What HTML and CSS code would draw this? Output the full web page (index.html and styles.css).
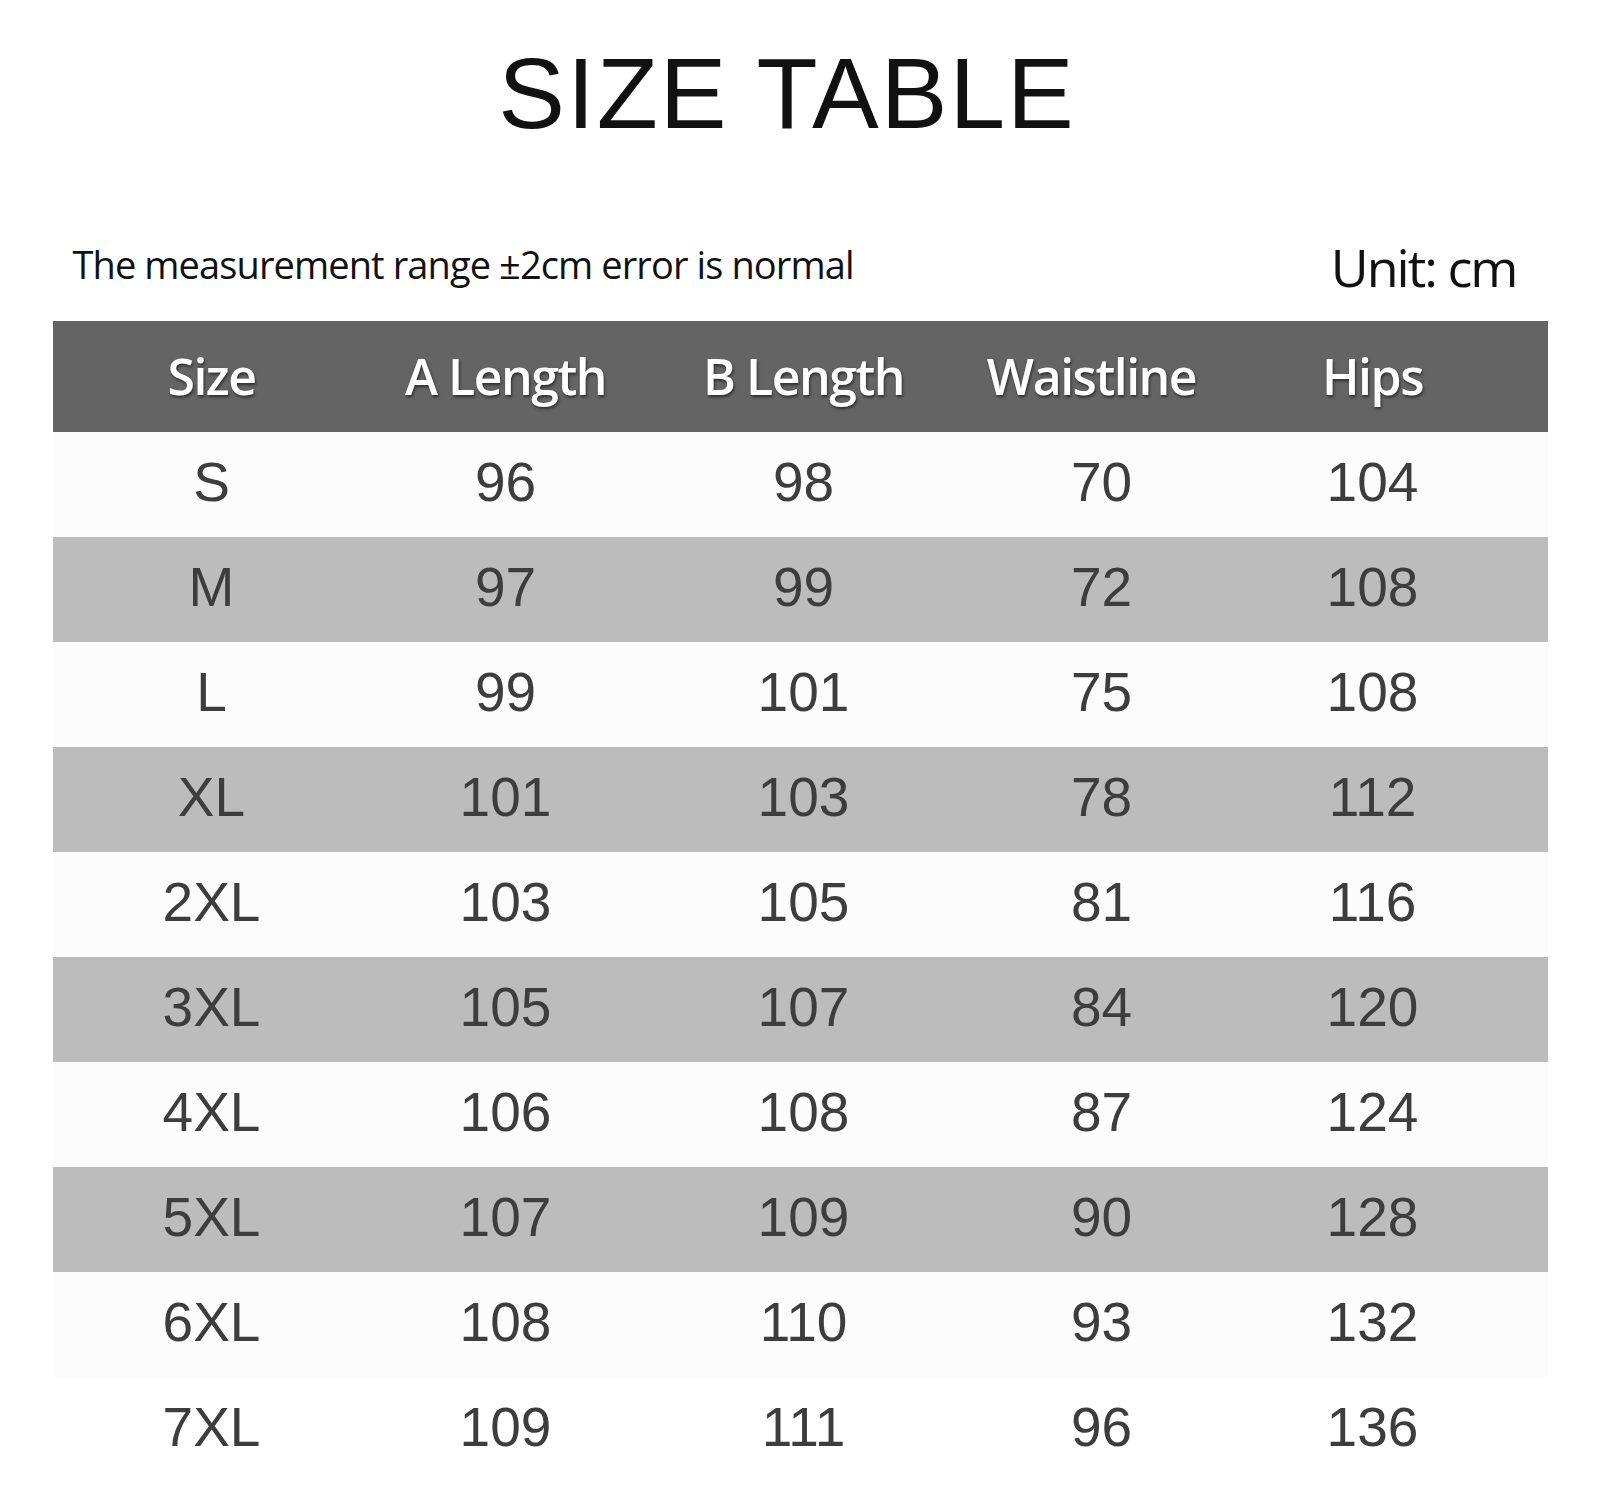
FILE: index.html
```html
<!DOCTYPE html>
<html lang="en">
<head>
<meta charset="utf-8">
<title>Size Table</title>
<link rel="stylesheet" href="styles.css">
</head>
<body>
<div class="page">
  <h1 class="title">SIZE TABLE</h1>
  <div class="info">
    <span class="note">The measurement range ±2cm error is normal</span>
    <span class="unit">Unit: cm</span>
  </div>
  <div class="table">
    <div class="row head">
      <div class="cell">Size</div><div class="cell">A Length</div><div class="cell">B Length</div><div class="cell waist">Waistline</div><div class="cell">Hips</div>
    </div>
    <div class="row light"><div class="cell">S</div><div class="cell">96</div><div class="cell">98</div><div class="cell">70</div><div class="cell">104</div></div>
    <div class="row dark"><div class="cell">M</div><div class="cell">97</div><div class="cell">99</div><div class="cell">72</div><div class="cell">108</div></div>
    <div class="row light"><div class="cell">L</div><div class="cell">99</div><div class="cell">101</div><div class="cell">75</div><div class="cell">108</div></div>
    <div class="row dark"><div class="cell">XL</div><div class="cell">101</div><div class="cell">103</div><div class="cell">78</div><div class="cell">112</div></div>
    <div class="row light"><div class="cell">2XL</div><div class="cell">103</div><div class="cell">105</div><div class="cell">81</div><div class="cell">116</div></div>
    <div class="row dark"><div class="cell">3XL</div><div class="cell">105</div><div class="cell">107</div><div class="cell">84</div><div class="cell">120</div></div>
    <div class="row light"><div class="cell">4XL</div><div class="cell">106</div><div class="cell">108</div><div class="cell">87</div><div class="cell">124</div></div>
    <div class="row dark"><div class="cell">5XL</div><div class="cell">107</div><div class="cell">109</div><div class="cell">90</div><div class="cell">128</div></div>
    <div class="row light"><div class="cell">6XL</div><div class="cell">108</div><div class="cell">110</div><div class="cell">93</div><div class="cell">132</div></div>
    <div class="row white"><div class="cell">7XL</div><div class="cell">109</div><div class="cell">111</div><div class="cell">96</div><div class="cell">136</div></div>
  </div>
</div>
</body>
</html>
```

FILE: styles.css
```css
html, body {
  margin: 0;
  padding: 0;
  background: #ffffff;
}

.page {
  width: 1495px;
  margin: 0 auto;
  padding-bottom: 20px;
}

.title {
  margin: 0;
  padding-top: 43px;
  padding-right: 26px;
  font-family: "Liberation Sans", Arial, sans-serif;
  font-weight: normal;
  font-size: 100px;
  line-height: 100px;
  letter-spacing: 2px;
  text-align: center;
  color: #111111;
}

.info {
  display: flex;
  justify-content: space-between;
  align-items: flex-start;
  margin-top: 96px;
  padding: 0 31px 0 20px;
  height: 56px;
  font-family: "Open Sans", "Liberation Sans", sans-serif;
  color: #111111;
}

.note {
  margin-top: 6px;
  font-size: 38px;
  line-height: 38px;
  letter-spacing: -0.9px;
}

.unit {
  font-size: 52px;
  line-height: 56px;
  letter-spacing: -2px;
}

.table {
  margin-top: 26px;
  display: flex;
  flex-direction: column;
}

.row {
  display: grid;
  grid-template-columns: 318px 270px 326px 270px 272px;
  align-items: center;
  height: 105px;
  font-family: "Liberation Sans", Arial, sans-serif;
  font-size: 55px;
  color: #3d3d3d;
}

.cell {
  text-align: center;
  padding-bottom: 6px;
}

.row.head {
  height: 111px;
  background: #646464;
  color: #ffffff;
  font-family: "Open Sans", "Liberation Sans", sans-serif;
  font-weight: 600;
  font-size: 50px;
  letter-spacing: -1.5px;
  text-shadow: 1px 2px 3px rgba(0, 0, 0, 0.55);
}

.row.head .cell {
  padding-bottom: 2px;
}

.row.head .waist {
  padding-right: 20px;
}

.row.light {
  background: #fcfcfc;
}

.row.dark {
  background: #bcbcbc;
}

.row.white {
  background: #ffffff;
}
```
